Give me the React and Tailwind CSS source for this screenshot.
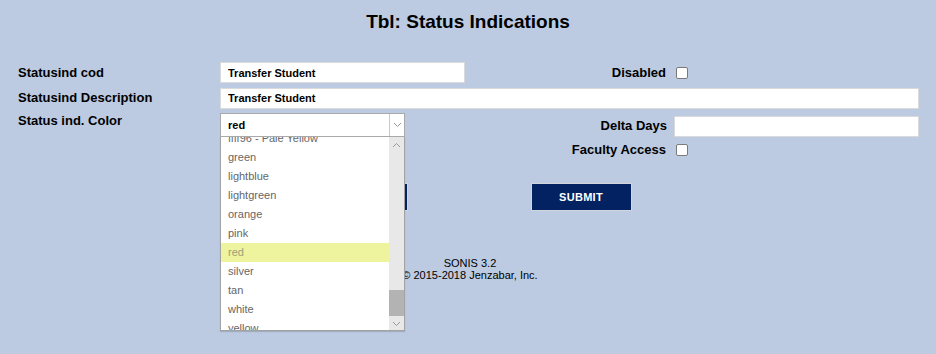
const FONT = { fontFamily: '"Liberation Sans", Arial, sans-serif' }

const COLORS = [
  'ffff96 - Pale Yellow', 'green', 'lightblue', 'lightgreen', 'orange',
  'pink', 'red', 'silver', 'tan', 'white', 'yellow',
]

function Checkbox() {
  return (
    <input
      type="checkbox"
      className="appearance-none w-[12px] h-[12px] border border-[#7a7a7a] rounded-[2px] bg-white shrink-0"
    />
  )
}

function TextBox({ value = '', className = '' }) {
  return (
    <input
      readOnly
      value={value}
      className={`h-[21px] bg-white border border-[#dadada] px-[7px] text-[11px] font-bold text-black outline-none ${className}`}
    />
  )
}

function Chevron({ up = false }) {
  return (
    <svg width="9" height="6" viewBox="0 0 9 6" className="block">
      <path
        d={up ? 'M1 5 L4.5 1.5 L8 5' : 'M1 1 L4.5 4.5 L8 1'}
        fill="none"
        stroke="#9a9a9a"
        strokeWidth="1"
      />
    </svg>
  )
}

function ColorSelect() {
  return (
    <div className="relative w-[185px] h-[24px]">
      <div className="flex h-full bg-white border border-[#a9a9a9]">
        <span className="flex-1 pl-[7px] text-[11px] font-bold leading-[22px] text-black">red</span>
        <span className="w-[15px] border-l border-[#c8c8c8] flex items-center justify-center">
          <Chevron />
        </span>
      </div>

      {/* open list */}
      <div className="absolute left-0 top-[24px] w-[185px] h-[194px] bg-white border border-t-0 border-[#a3a3a3] flex z-10 font-normal shadow-[0_1px_1px_rgba(0,0,0,0.15)]">
        <div className="flex-1 overflow-hidden">
          <ul className="-mt-[8px]">
            {COLORS.map(c => (
              <li
                key={c}
                className={`h-[19px] pl-[7px] text-[11px] leading-[19px] whitespace-nowrap ${
                  c === 'red' ? 'bg-[#eef49e] text-[#9aa07a]' : 'text-[#666]'
                }`}
              >
                {c}
              </li>
            ))}
          </ul>
        </div>
        <div className="w-[15px] bg-[#e8e8e8] flex flex-col">
          <div className="h-[15px] flex items-center justify-center"><Chevron up /></div>
          <div className="flex-1 flex flex-col justify-end">
            <div className="h-[26px] bg-[#b3b3b3] mb-[1px]" />
          </div>
          <div className="h-[13px] flex items-center justify-center"><Chevron /></div>
        </div>
      </div>
    </div>
  )
}

function Button({ children }) {
  return (
    <button className="w-[101px] h-[28px] bg-[#022262] border border-[#d2d5db] text-white text-[11px] font-bold tracking-[0.3px]">
      {children}
    </button>
  )
}

export default function App() {
  return (
    <div className="min-h-screen w-full bg-[#bccbe1] text-black" style={FONT}>
      <h1 className="pt-[11px] text-center text-[19px] leading-[22px] font-bold">
        Tbl: Status Indications
      </h1>

      <div className="pl-[18px] mt-[29px] text-[13px] font-bold">
        {/* row 1 */}
        <div className="flex items-center h-[21px]">
          <label className="w-[202px]">Statusind cod</label>
          <TextBox value="Transfer Student" className="w-[245px]" />
          <label className="w-[201px] text-right">Disabled</label>
          <span className="ml-[10px] flex"><Checkbox /></span>
        </div>

        {/* row 2 */}
        <div className="flex items-center h-[20px] mt-[5px]">
          <label className="w-[202px]">Statusind Description</label>
          <TextBox value="Transfer Student" className="w-[699px] h-[20px]" />
        </div>

        {/* row 3 */}
        <div className="flex items-start h-[24px] mt-[5px]">
          <label className="w-[202px] leading-[16px]">Status ind. Color</label>
          <ColorSelect />
          <div className="flex items-center h-[24px] mt-[1px]">
            <label className="w-[262px] text-right">Delta Days</label>
            <TextBox className="ml-[7px] w-[245px] h-[20px]" />
          </div>
        </div>

        {/* row 4 */}
        <div className="flex items-center h-[20px] mt-[3px]">
          <span className="w-[387px]" />
          <label className="w-[261px] text-right">Faculty Access</label>
          <span className="ml-[10px] flex"><Checkbox /></span>
        </div>
      </div>

      <div className="flex justify-center gap-[123px] mt-[23px] pl-[2px]">
        <Button>DELETE</Button>
        <Button>SUBMIT</Button>
      </div>

      <div className="mt-[46px] text-center text-[11px] leading-[12px] text-black pl-[4px]">
        <div>SONIS 3.2</div>
        <div>© 2015-2018 Jenzabar, Inc.</div>
      </div>
    </div>
  )
}
